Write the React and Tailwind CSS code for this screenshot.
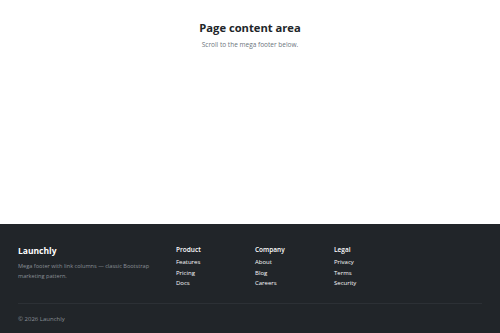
import React from 'react';

const columns = [
  { title: 'Product', links: ['Features', 'Pricing', 'Docs'] },
  { title: 'Company', links: ['About', 'Blog', 'Careers'] },
  { title: 'Legal', links: ['Privacy', 'Terms', 'Security'] },
];

export default function App() {
  return (
    <div className="min-h-[333px] bg-white flex flex-col" style={{ fontFamily: '"Open Sans", "Noto Sans", sans-serif' }}>
      {/* page content */}
      <main className="h-[224px] pt-[19px] text-center">
        <h1 className="text-[11.2px] leading-[17px] font-bold text-[#212529]">Page content area</h1>
        <p className="mt-[4px] text-[6.5px] leading-[9px] text-[#6c757d]">Scroll to the mega footer below.</p>
      </main>

      {/* mega footer */}
      <footer className="flex-1 bg-[#212529] px-[18px] pt-[21px] pb-[8px]">
        <div className="flex">
          <div className="w-[158px] pr-[10px]">
            <div className="text-[8.5px] leading-[12px] font-bold text-white">Launchly</div>
            <p className="mt-[5px] text-[5.6px] leading-[9.5px] text-[#8a9097]">
              Mega footer with link columns — classic Bootstrap marketing pattern.
            </p>
          </div>
          {columns.map((col) => (
            <div key={col.title} className="w-[79px]">
              <div className="text-[6.5px] leading-[10px] font-semibold text-white">{col.title}</div>
              <ul className="mt-[2px] flex flex-col">
                {col.links.map((l) => (
                  <li key={l} className="text-[6px] leading-[10.5px] text-[#f8f9fa]">{l}</li>
                ))}
              </ul>
            </div>
          ))}
        </div>
        <div className="mt-[14px] border-t border-[#2c3035]" />
        <div className="pt-[11px] text-[6px] leading-[9px] text-[#8a9097]">© 2026 Launchly</div>
      </footer>
    </div>
  );
}
